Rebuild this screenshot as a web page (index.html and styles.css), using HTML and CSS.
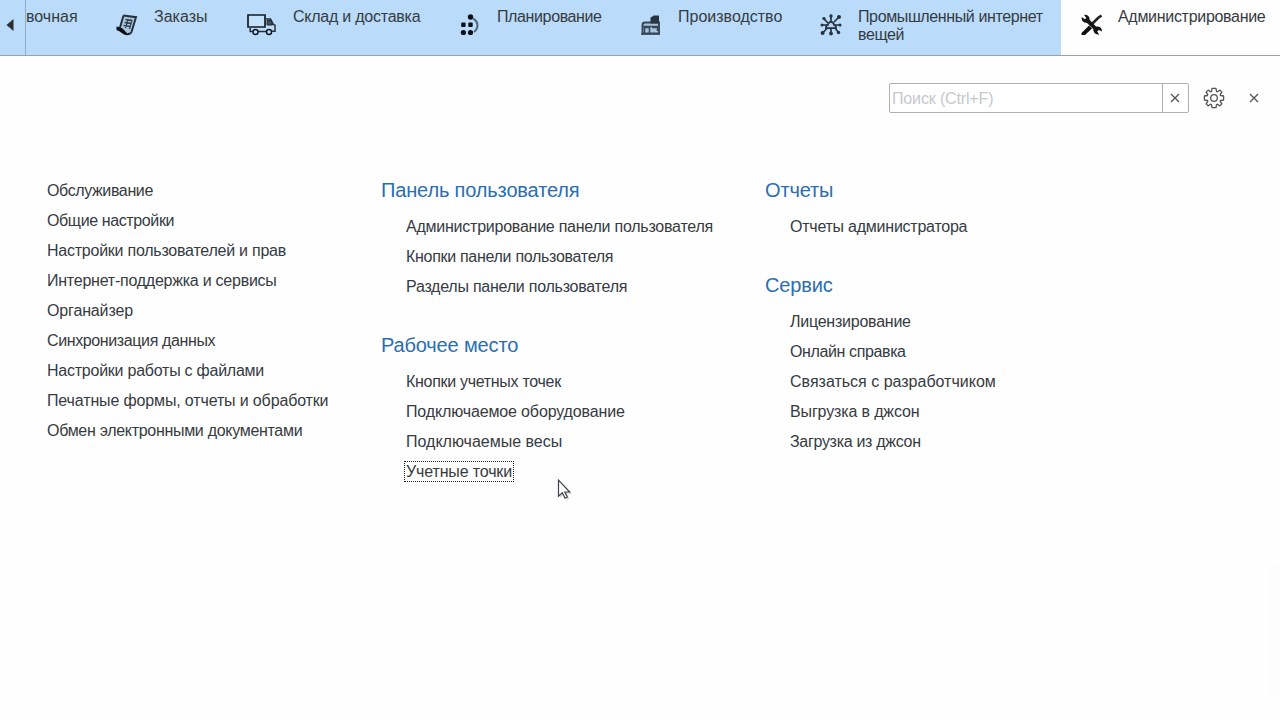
FILE: index.html
```html
<!DOCTYPE html>
<html lang="ru">
<head>
<meta charset="utf-8">
<title>Администрирование</title>
<link rel="stylesheet" href="styles.css">
</head>
<body>
<nav class="sections">
  <div class="scroll-left"><svg width="8" height="14" viewBox="0 0 8 14"><path d="M7.5 1v12L.5 7z" fill="#2b2f35"/></svg></div>
  <div class="section section-cut"><span>вочная</span></div>
  <div class="section section-orders">
    <svg class="icon" width="22" height="22" viewBox="0 0 22 22"><path d="M8 1.5 20 3.5 15.5 19.5 11 19 4 14z" fill="#a9c6df"/><path d="M7.500 1.500 20 3.200 15.500 18Q14.500 20.500 12 19.500M7.500 1.500 4 13.500" fill="none" stroke="#28313a" stroke-width="2"/><path d="M.5 12.500Q6 13 8 16T14 20.500Q10 22.500 6.500 19.500T.5 16z" fill="#0c1015"/><path d="m9.500 5.500 7 1M8.500 8.500l7 1M7.500 11.500l7 1M12 5.500 9.500 14M16 6l-2.500 9" stroke="#344250" stroke-width="1.300"/></svg>
    <span>Заказы</span>
  </div>
  <div class="section section-stock">
    <svg class="icon" width="30" height="22" viewBox="0 0 30 22"><path d="M1 1h17v12H1z" fill="#c4e1fa" stroke="#151a20" stroke-width="1.700"/><path d="M18 5h5.500l3 5.500 1.500.7v6h-3.500M20 17.500h-9M6 17.500H3.200V14" fill="none" stroke="#26303a" stroke-width="1.500"/><path d="M20 6.500h4l1.500 4.500H20z" fill="#40505e" stroke="#222a32"/><circle cx="8.500" cy="18" r="2.500" fill="#c4e1fa" stroke="#151a20" stroke-width="1.500"/><circle cx="22" cy="18" r="2.500" fill="#c4e1fa" stroke="#151a20" stroke-width="1.500"/></svg>
    <span class="tight-2">Склад и доставка</span>
  </div>
  <div class="section section-plan">
    <svg class="icon" width="22" height="22" viewBox="0 0 22 22"><g fill="#0c1014"><circle cx="11.500" cy="3" r="2.700"/><rect x="2.200" y="8.600" width="4.400" height="4.400" rx=".8"/><rect x="9.300" y="8.600" width="4.400" height="4.400" rx=".8"/><circle cx="4.400" cy="18.500" r="2.600"/><circle cx="11.500" cy="18.500" r="2.600"/></g><path d="M14 4.500c5.500 3 6 9.500 1 13.500" fill="none" stroke="#52677b" stroke-width="2"/></svg>
    <span class="tight-4">Планирование</span>
  </div>
  <div class="section section-production">
    <svg class="icon" width="22" height="22" viewBox="0 0 22 22"><path d="M2.500 19.500V11q0-2.500 2.500-2.500h14v11z" fill="#a5c4e0" stroke="#394653" stroke-width="1.900"/><path d="M10.500 9.500V3.500l2-1 1-1H19v8z" fill="#2a3440"/><path d="M2 12.500h17M4.500 19v-5.500h5V19M12 13.500h5.500V17M1 20h19" fill="none" stroke="#394653" stroke-width="1.500"/></svg>
    <span>Производство</span>
  </div>
  <div class="section section-iot">
    <svg class="icon" width="22" height="22" viewBox="0 0 22 22"><path d="M11 8V2m3 6 5-5M8 9 3 4m4 7H1.500M15 11h5.500M7.500 14 2.500 19M11 14v5.500M14.500 13.500 19 19" stroke="#263442" stroke-width="1.700"/><path d="M6 14.200h10q.6-2.500-1.800-3-.7-3.400-3.200-3.400T8 10.800q-2.400.4-2 3.400z" fill="#b6d5ef" stroke="#26313d" stroke-width="1.700"/><g fill="#26313d"><circle cx="11" cy="2" r="1.700"/><circle cx="19" cy="3" r="2"/><circle cx="4" cy="4.500" r="1.600"/><circle cx="2" cy="11" r="1.500"/><circle cx="20" cy="11" r="1.500"/><circle cx="2.600" cy="19" r="2"/><circle cx="11" cy="19.500" r="1.900"/><circle cx="18.500" cy="18.500" r="1.700"/></g></svg>
    <span class="tight-4">Промышленный интернет вещей</span>
  </div>
  <div class="section section-admin">
    <svg class="icon" width="22" height="22" viewBox="0 0 22 22"><path d="M.5 19 8 11.500l3 3L4 21H.5z" fill="#111"/><path d="m11.500 9.500 5.500-5.500 3.500-2.500" fill="none" stroke="#222" stroke-width="2.600"/><path d="M.5 3 4 5.300 5.300 4 3 .8Q8.500.5 8.800 6L15 12.500q6-.5 6 5l-3.200-1.500-1.600 1.600 2 3.200q-6 0-6-5.700L6 9Q.5 8.800.5 3z" fill="#151515"/></svg>
    <span class="tight-3">Администрирование</span>
  </div>
</nav>
<div class="toolbar">
  <div class="search">
    <span class="search-hint">Поиск (Ctrl+F)</span>
    <span class="search-clear"><svg width="10" height="10" viewBox="0 0 10 10"><path d="m1 1 8 8M9 1 1 9" stroke="#555" stroke-width="1.300"/></svg></span>
  </div>
  <svg class="gear" width="22" height="22" viewBox="0 0 22 22"><path d="M9 1.400h4l.5 3 1 .4 2.400-1.700 2 2-1.700 2.400.4 1 3 .5v4l-3 .5-.4 1 1.700 2.400-2 2-2.400-1.700-1 .4-.5 3H9l-.5-3-1-.4-2.400 1.700-2-2 1.700-2.400-.4-1-3-.5V9l3-.5.4-1-1.700-2.400 2-2 2.400 1.700 1-.4z" fill="none" stroke="#555" stroke-width="1.300" stroke-linejoin="round"/><circle cx="11" cy="11" r="3.300" fill="none" stroke="#555" stroke-width="1.300"/></svg>
  <svg class="close" width="10" height="10" viewBox="0 0 10 10"><path d="m1 1 8 8M9 1 1 9" stroke="#555" stroke-width="1.300"/></svg>
</div>
<main class="commands">
  <ul class="list">
    <li class="tight-4">Обслуживание</li><li class="tight-4">Общие настройки</li><li class="tight-2">Настройки пользователей и прав</li><li class="tight-2">Интернет-поддержка и сервисы</li><li class="tight-1">Органайзер</li><li class="tight-4">Синхронизация данных</li><li class="tight-2">Настройки работы с файлами</li><li class="tight-1">Печатные формы, отчеты и обработки</li><li class="tight-3">Обмен электронными документами</li>
  </ul>
  <div class="column">
    <section class="group">
      <h2>Панель пользователя</h2>
      <ul class="list"><li class="tight-2">Администрирование панели пользователя</li><li class="tight-3">Кнопки панели пользователя</li><li class="tight-2">Разделы панели пользователя</li></ul>
    </section>
    <section class="group">
      <h2>Рабочее место</h2>
      <ul class="list"><li class="tight-3">Кнопки учетных точек</li><li class="tight-1">Подключаемое оборудование</li><li>Подключаемые весы</li><li class="tight-1"><span class="focused">Учетные точки</span></li></ul>
    </section>
  </div>
  <div class="column">
    <section class="group">
      <h2>Отчеты</h2>
      <ul class="list"><li class="tight-2">Отчеты администратора</li></ul>
    </section>
    <section class="group">
      <h2>Сервис</h2>
      <ul class="list"><li class="tight-2">Лицензирование</li><li class="tight-4">Онлайн справка</li><li>Связаться с разработчиком</li><li class="tight-1">Выгрузка в джсон</li><li class="tight-3">Загрузка из джсон</li></ul>
    </section>
  </div>
</main>
<div class="edge-shade"></div>
<svg class="cursor" width="18" height="24" viewBox="0 0 18 24"><path d="M3 3v16l4-3.500 3 5.500 2.500-1.500L10 15h5z" fill="#999" opacity=".35"/><path d="M1.500 1.200v16l3.800-3.500 2.700 5.500 2.300-1.200-2.500-5h4.900z" fill="#fff" stroke="#3c4048" stroke-width="1.200"/></svg>
</body>
</html>
```
FILE: styles.css
```css
* { box-sizing: border-box; }
body {
  margin: 0;
  height: 720px;
  overflow: hidden;
  background: #fefefe;
  color: #363b42;
  font: 16px/18px "Liberation Sans", Arial, sans-serif;
}
svg { display: block; flex: none; }
.tight-1 { letter-spacing: -0.14px; }
.tight-2 { letter-spacing: -0.24px; }
.tight-3 { letter-spacing: -0.3px; }
.tight-4 { letter-spacing: -0.38px; }
.sections {
  display: flex;
  height: 56px;
  background: #badbfa;
  border-bottom: 1px solid #98a0a8;
}
.scroll-left {
  width: 26px;
  padding: 18px 0 0 6px;
  border-right: 1px solid #8fafc9;
}
.section {
  display: flex;
  align-items: flex-start;
  gap: 16px;
  padding: 8px 0 0 20px;
  white-space: nowrap;
  flex: none;
}
.icon { margin-top: 6px; }
.section-cut { width: 70px; padding-left: 0; }
.section-orders { width: 131px; }
.section-stock { width: 212px; }
.section-plan { width: 181px; }
.section-production { width: 180px; }
.section-iot { width: 261px; white-space: normal; }
.section-admin { width: 219px; gap: 15px; background: #fefefe; }
.toolbar {
  display: flex;
  align-items: center;
  justify-content: flex-end;
  padding: 27px 21px 0 0;
}
.search {
  display: flex;
  width: 300px;
  height: 30px;
  border: 1px solid #b0b0b0;
  border-radius: 2px;
  background: #fff;
}
.search-hint {
  flex: 1;
  padding: 6px 2px;
  color: #c6c8cc;
  letter-spacing: -0.15px;
}
.search-clear {
  display: flex;
  align-items: center;
  justify-content: center;
  width: 26px;
  padding-right: 1px;
  border-left: 1px solid #b0b0b0;
}
.gear { margin: 0 24px 0 14px; }
.commands {
  display: grid;
  grid-template-columns: 334px 384px 300px;
  padding: 62px 0 0 47px;
}
.list {
  margin: 0;
  padding: 1px 0 0;
  list-style: none;
  line-height: 30px;
  white-space: nowrap;
}
.list li { height: 30px; }
.group { margin-bottom: 28px; }
.group h2 {
  margin: 0;
  height: 36px;
  color: #2a6eb4;
  font-size: 20px;
  font-weight: 400;
  line-height: 30px;
  letter-spacing: -0.15px;
}
.group .list { padding-left: 25px; }
.focused {
  outline: 1px dotted #222;
  outline-offset: 1px;
}
.edge-shade {
  position: absolute;
  right: 0;
  top: 566px;
  width: 11px;
  height: 128px;
  background: #fcfcfc;
}
.cursor {
  position: absolute;
  left: 557px;
  top: 479px;
}
```
